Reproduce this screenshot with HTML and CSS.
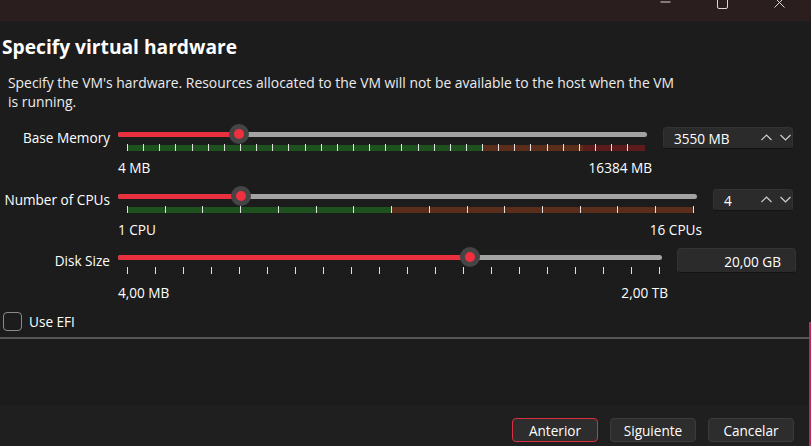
FILE: index.html
```html
<!DOCTYPE html>
<html lang="en">
<head>
<meta charset="utf-8">
<title>Specify virtual hardware</title>
<link rel="stylesheet" href="styles.css">
</head>
<body>
<div class="titlebar">
  <span class="wc"><svg width="11" height="11" viewBox="0 0 11 11"><path d="M0.5 5 H10.5" stroke="#d8d8d8" stroke-width="1" fill="none"/></svg></span>
  <span class="wc"><svg width="11" height="12" viewBox="0 0 11 12"><rect x="0.5" y="0.5" width="10" height="11" rx="1.5" stroke="#d8d8d8" stroke-width="1" fill="none"/></svg></span>
  <span class="wc"><svg width="11" height="11" viewBox="0 0 11 11"><path d="M0.5 0.5 L10.5 10.5 M10.5 0.5 L0.5 10.5" stroke="#d8d8d8" stroke-width="1" fill="none"/></svg></span>
</div>

<main class="content">
  <h1 class="title">Specify virtual hardware</h1>
  <p class="desc">Specify the VM's hardware. Resources allocated to the VM will not be available to the host when the VM is running.</p>

  <div class="row row-mem">
    <div class="label">Base Memory</div>
    <div class="slider">
      <div class="groove">
        <div class="track"><div class="fill" style="width:121px"></div></div>
        <div class="thumb" style="left:121px"></div>
      </div>
      <div class="ticks ticks-mem"></div>
    </div>
    <div class="spin spin-mem">
      <span class="spin-val">3550 MB</span>
      <span class="chev">
        <svg width="11" height="7" viewBox="0 0 11 7"><path d="M0.5 6 L5.5 1 L10.5 6" stroke="#d0d0d0" stroke-width="1.2" fill="none"/></svg>
        <svg width="11" height="7" viewBox="0 0 11 7"><path d="M0.5 1 L5.5 6 L10.5 1" stroke="#d0d0d0" stroke-width="1.2" fill="none"/></svg>
      </span>
    </div>
  </div>
  <div class="range range-mem"><span>4 MB</span><span>16384 MB</span></div>

  <div class="row row-cpu">
    <div class="label">Number of CPUs</div>
    <div class="slider">
      <div class="groove">
        <div class="track"><div class="fill" style="width:123px"></div></div>
        <div class="thumb" style="left:122.7px"></div>
      </div>
      <div class="ticks ticks-cpu"></div>
    </div>
    <div class="spin spin-cpu">
      <span class="spin-val">4</span>
      <span class="chev">
        <svg width="11" height="7" viewBox="0 0 11 7"><path d="M0.5 6 L5.5 1 L10.5 6" stroke="#d0d0d0" stroke-width="1.2" fill="none"/></svg>
        <svg width="11" height="7" viewBox="0 0 11 7"><path d="M0.5 1 L5.5 6 L10.5 1" stroke="#d0d0d0" stroke-width="1.2" fill="none"/></svg>
      </span>
    </div>
  </div>
  <div class="range range-cpu"><span>1 CPU</span><span>16 CPUs</span></div>

  <div class="row row-disk">
    <div class="label">Disk Size</div>
    <div class="slider">
      <div class="groove">
        <div class="track"><div class="fill" style="width:352px"></div></div>
        <div class="thumb" style="left:352px"></div>
      </div>
      <div class="ticks ticks-disk"></div>
    </div>
    <div class="field">20,00 GB</div>
  </div>
  <div class="range range-disk"><span>4,00 MB</span><span>2,00 TB</span></div>

  <label class="check"><span class="box"></span><span>Use EFI</span></label>
</main>

<div class="sep"></div>

<footer class="footer">
  <button class="btn btn-focus">Anterior</button>
  <button class="btn">Siguiente</button>
  <button class="btn">Cancelar</button>
</footer>

<div class="edge"></div>
</body>
</html>
```
FILE: styles.css
```css
* { box-sizing: border-box; }
html, body { height: 100%; }
body {
  margin: 0;
  background: #1c1c1c;
  color: #ffffff;
  font-family: "Open Sans", "Noto Sans", sans-serif;
  display: flex;
  flex-direction: column;
  overflow: hidden;
  position: relative;
}

.titlebar {
  height: 21px;
  background: #2a1e1e;
  display: flex;
  justify-content: flex-end;
  padding-right: 3px;
}
.wc {
  width: 57px;
  display: flex;
  justify-content: center;
  align-items: flex-start;
}
.wc svg { margin-top: -3px; display: block; }

.content { display: flex; flex-direction: column; }

.title {
  margin: 13px 0 0 2px;
  font-size: 19.2px;
  font-weight: 700;
  line-height: 26px;
}
.desc {
  margin: 13px 0 0 8px;
  max-width: 676px;
  font-size: 13.9px;
  line-height: 19px;
  color: #ececec;
}

.row {
  display: flex;
  align-items: center;
  height: 27px;
  margin-top: 13px;
  padding-right: 18px;
}
.row-cpu { margin-top: 9px; }
.row-disk { margin-top: 8px; padding-right: 15px; }

.label {
  width: 110px;
  margin-right: 8px;
  text-align: right;
  font-size: 13.6px;
  line-height: 19px;
  white-space: nowrap;
}

.slider { flex: 1; display: flex; flex-direction: column; }
.groove {
  position: relative;
  height: 20px;
  display: flex;
  align-items: center;
}
.track {
  flex: 1;
  height: 5px;
  border-radius: 3px;
  background: #a3a3a3;
  overflow: hidden;
}
.fill { height: 100%; background: #e8303f; }
.thumb {
  position: absolute;
  top: 0;
  width: 20px;
  height: 20px;
  margin-left: -10px;
  border-radius: 50%;
  background: #454545;
  display: flex;
  align-items: center;
  justify-content: center;
}
.thumb::after {
  content: "";
  width: 10px;
  height: 10px;
  border-radius: 50%;
  background: #f0303f;
}

.ticks {
  height: 7px;
  margin-left: 9px;
  background-repeat: no-repeat;
}
.ticks-mem {
  margin-right: 2px;
  background-image:
    repeating-linear-gradient(90deg, #e2e2e2 0 1px, transparent 1px 16.14px),
    linear-gradient(90deg, #1d521f 0 355px, #5a2e1b 355px 456px, #5c1c1c 456px);
  background-size: 502px 100%, 100% 6px;
  background-position: 0 0, 0 1px;
}
.ticks-cpu {
  margin-right: 3px;
  background-image:
    repeating-linear-gradient(90deg, #e2e2e2 0 1px, transparent 1px 37.73px),
    linear-gradient(90deg, #1d521f 0 264px, #5a2e1b 264px);
  background-size: 100% 100%, 100% 6px;
  background-position: 0 0, 0 1px;
}
.ticks-disk {
  margin-right: 2px;
  background-image: repeating-linear-gradient(90deg, #e2e2e2 0 1px, transparent 1px 28px);
  background-size: 100% 100%;
}

.spin, .field {
  display: flex;
  align-items: center;
  background: #2b2b2b;
  border: 1px solid #333333;
  border-bottom-color: #141414;
  border-radius: 4px;
  font-size: 13.6px;
  line-height: 19px;
  padding-top: 2px;
}
.spin { height: 22px; margin-left: 16px; padding-left: 10px; padding-right: 1px; }
.spin-mem { width: 130px; }
.spin-cpu { width: 80px; }
.spin-val { flex: 1; }
.chev { display: flex; align-items: center; gap: 8px; margin-top: -2px; }
.chev svg { display: block; }

.field {
  width: 119px;
  height: 25px;
  margin-left: 15px;
  justify-content: flex-end;
  padding-right: 14px;
}

.range {
  display: flex;
  justify-content: space-between;
  margin: 7px 13px 0 118px;
  font-size: 13.6px;
  line-height: 19px;
}
.range-cpu { margin-right: 109px; }
.range-mem { margin-right: 159px; }
.range-disk { margin-top: 9px; margin-right: 143px; }

.check {
  display: flex;
  align-items: center;
  gap: 7px;
  height: 19px;
  margin: 10px 0 0 3px;
  font-size: 13.6px;
  line-height: 19px;
}
.box {
  width: 19px;
  height: 19px;
  border: 1px solid #8a8a8a;
  border-radius: 4px;
}

.sep {
  height: 2px;
  margin-top: 6px;
  background: #555555;
}

.footer {
  margin-top: auto;
  height: 41px;
  background: #1f1f1f;
  display: flex;
  justify-content: flex-end;
  gap: 12px;
  padding: 13px 17px 4px 0;
}
.btn {
  width: 86px;
  height: 24px;
  padding: 0;
  background: #2d2d2d;
  border: 1px solid #3b3b3b;
  border-radius: 4px;
  color: #ffffff;
  font-family: "Open Sans", "Noto Sans", sans-serif;
  font-size: 13.6px;
  line-height: 19px;
}
.btn-focus { border-color: #d92f3e; }

.edge {
  position: absolute;
  right: 0;
  top: 322px;
  bottom: 0;
  width: 2px;
  background: #c0255c;
}
```
